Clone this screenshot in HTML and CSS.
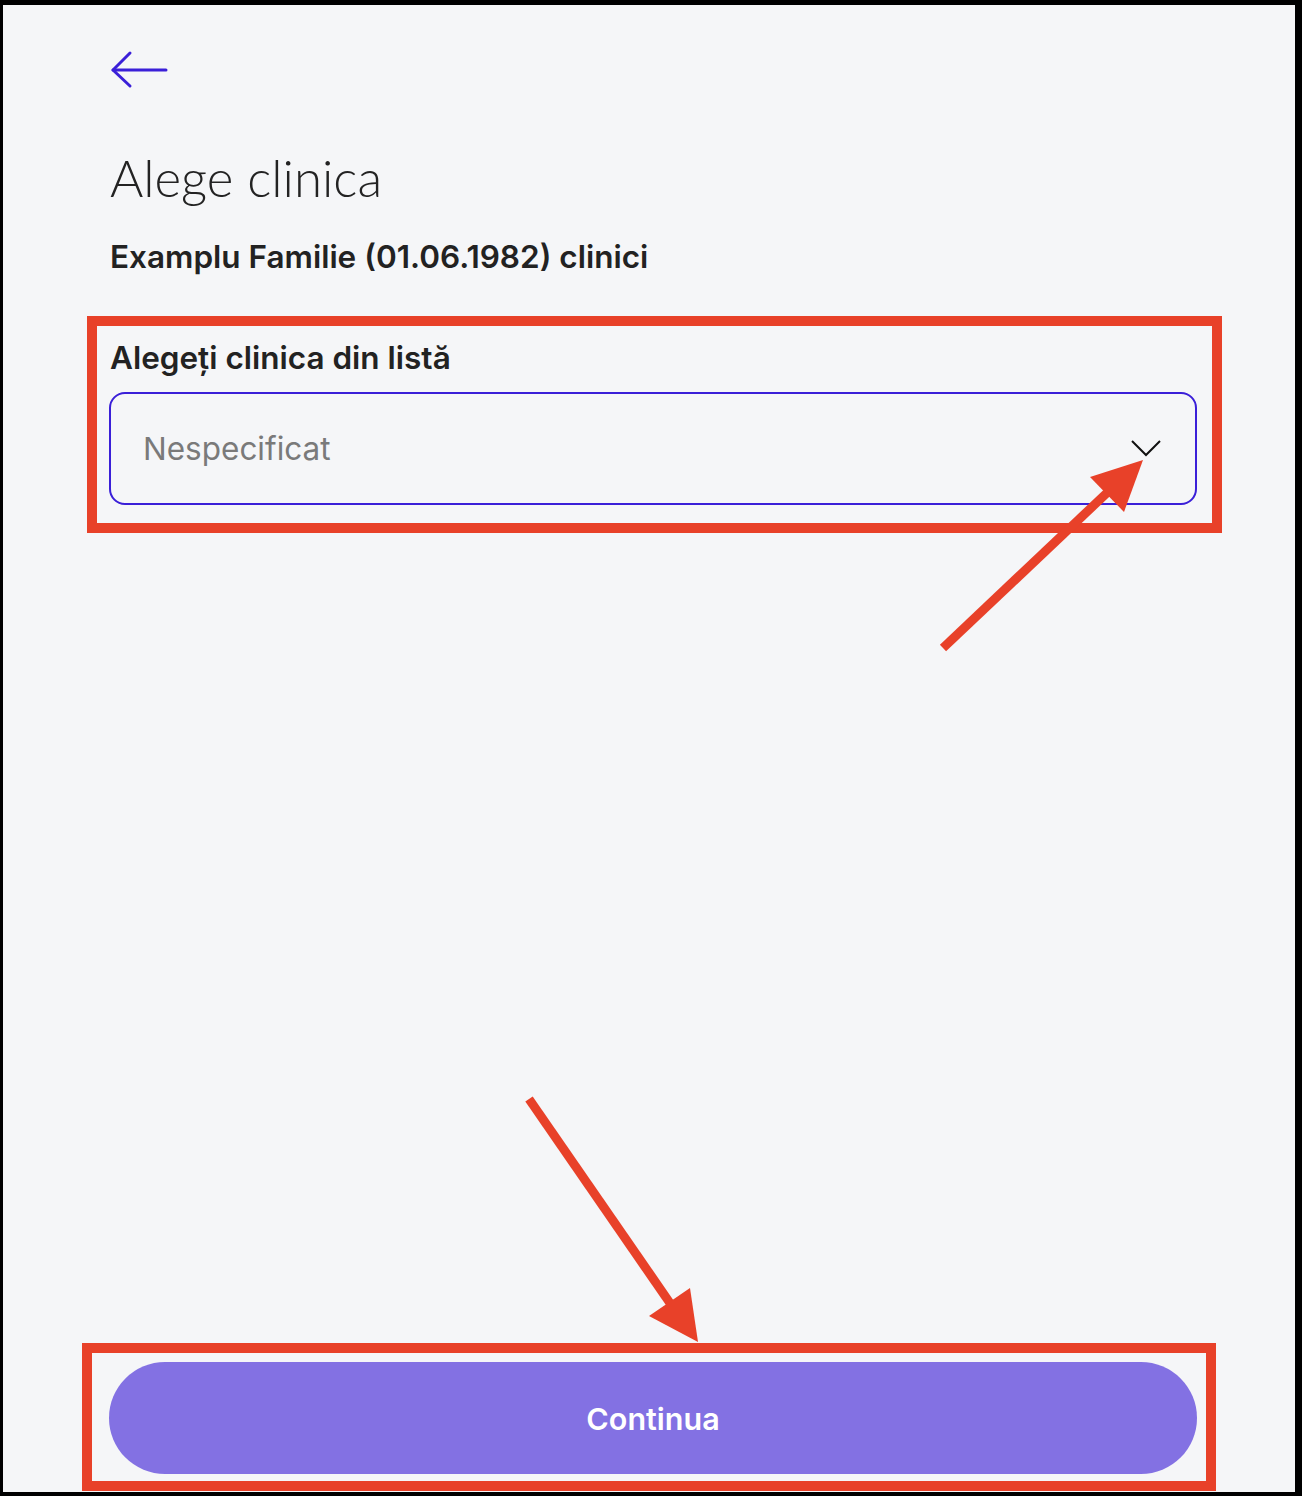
FILE: index.html
```html
<!DOCTYPE html>
<html lang="ro">
<head>
<meta charset="utf-8">
<title>Alege clinica</title>
<link rel="stylesheet" href="styles.css">
</head>
<body>
<div class="frame">
  <div class="screen">
    <button class="back" type="button" aria-label="Înapoi">
      <svg width="60" height="40" viewBox="0 0 60 40" fill="none" stroke="#3a1fd8" stroke-width="3" stroke-linecap="round" stroke-linejoin="round">
        <path d="M4 20 H57"/>
        <path d="M21 3 L4 20 L21 36"/>
      </svg>
    </button>
    <h1 class="title">Alege clinica</h1>
    <p class="subtitle">Examplu Familie (01.06.1982) clinici</p>
    <label class="label">Alegeți clinica din listă</label>
    <div class="select">
      <span class="placeholder">Nespecificat</span>
      <svg class="chevron" width="30" height="17" viewBox="0 0 30 17" fill="none" stroke="#111" stroke-width="2">
        <polyline points="1,1 15,15 29,1"/>
      </svg>
    </div>
    <button class="continue" type="button">Continua</button>
  </div>
</div>
<svg class="annot" width="1302" height="1496" viewBox="0 0 1302 1496" fill="none">
  <rect x="92" y="321" width="1125" height="207" stroke="#e84129" stroke-width="10"/>
  <rect x="87" y="1348" width="1124" height="138" stroke="#e84129" stroke-width="10"/>
  <line x1="943" y1="648" x2="1110" y2="490" stroke="#e84129" stroke-width="9"/>
  <polygon points="1090,477 1143,460 1124,512" fill="#e84129"/>
  <line x1="529" y1="1099" x2="672" y2="1306" stroke="#e84129" stroke-width="9"/>
  <polygon points="649,1316 690,1288 698,1342" fill="#e84129"/>
</svg>
</body>
</html>
```
FILE: styles.css
```css
html, body {
  margin: 0;
  padding: 0;
}
body {
  position: relative;
  width: 1302px;
  height: 1496px;
  overflow: hidden;
  font-family: Inter, "Noto Sans", sans-serif;
}
.frame {
  box-sizing: border-box;
  width: 1302px;
  height: 1496px;
  border-style: solid;
  border-color: #000;
  border-width: 5px 7px 4px 3px;
  background: #f5f6f8;
}
.screen {
  box-sizing: border-box;
  height: 100%;
  display: flex;
  flex-direction: column;
  padding: 0 98px 18px 106px;
}
.back {
  align-self: flex-start;
  margin: 45px 0 0 0;
  padding: 0;
  border: 0;
  background: none;
  width: 60px;
  height: 40px;
  display: block;
}
.back svg { display: block; }
.title {
  margin: 59px 0 0 1px;
  font-family: Lato, sans-serif;
  font-weight: 300;
  font-size: 51px;
  line-height: 58px;
  color: #232323;
}
.subtitle {
  margin: 32px 0 0 1px;
  font-weight: 600;
  font-size: 31.5px;
  line-height: 36px;
  color: #222;
}
.label {
  display: block;
  margin: 65px 0 0 1px;
  font-weight: 600;
  font-size: 31.5px;
  line-height: 36px;
  color: #222;
}
.select {
  box-sizing: border-box;
  margin-top: 16px;
  height: 113px;
  border: 2px solid #3a1fd8;
  border-radius: 16px;
  display: flex;
  align-items: center;
  justify-content: space-between;
  padding: 0 34px 0 32px;
}
.placeholder {
  font-size: 31.5px;
  color: #7a7a7a;
}
.chevron { display: block; }
.continue {
  margin-top: auto;
  height: 112px;
  border: 0;
  border-radius: 56px;
  background: #8371e3;
  color: #fff;
  font-family: Inter, "Noto Sans", sans-serif;
  font-weight: 600;
  font-size: 30.5px;
}
.annot {
  position: absolute;
  left: 0;
  top: 0;
}
```
